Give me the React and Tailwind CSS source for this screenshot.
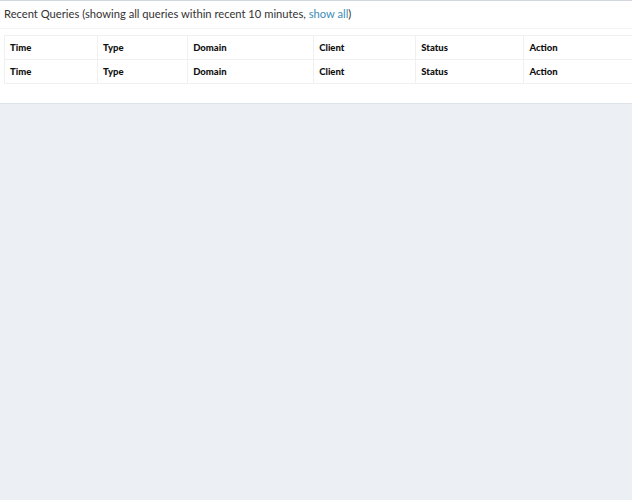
import React from 'react';

const columns = [
  { label: 'Time', width: 'w-[93px]' },
  { label: 'Type', width: 'w-[90px]' },
  { label: 'Domain', width: 'w-[126px]' },
  { label: 'Client', width: 'w-[102px]' },
  { label: 'Status', width: 'w-[108px]' },
  { label: 'Action', width: 'w-[120px]' },
];

const Row = () => (
  <tr className="border-t border-[#f0f0f0]">
    {columns.map((col, i) => (
      <th
        key={col.label}
        className={`${col.width} h-[24px] px-[5px] pt-[2px] text-left align-middle text-[9.5px] font-black text-[#111] ${i > 0 ? 'border-l border-[#f0f0f0]' : ''}`}
      >
        {col.label}
      </th>
    ))}
  </tr>
);

const App = () => {
  return (
    <div className="min-h-[500px] bg-[#ecf0f5] font-['Lato','Liberation_Sans',sans-serif]">
      <div className="bg-white border-t border-[#d2d6de] border-b border-b-[#dde2e8]">
        <div className="h-[28px] px-[4px] pb-[1px] flex items-center border-b border-[#f4f4f4]">
          <h3 className="text-[11.2px] text-[#333]">
            Recent Queries (showing all queries within recent 10 minutes,{' '}
            <a href="#" className="text-[#3c8dbc]">show all</a>)
          </h3>
        </div>
        <div className="pt-[6px] pl-[4px] pb-[19px] overflow-hidden">
          <table className="border-collapse border-l border-b border-[#f0f0f0] table-fixed w-[640px]">
            <thead>
              <Row />
            </thead>
            <tfoot>
              <Row />
            </tfoot>
          </table>
        </div>
      </div>
    </div>
  );
};

export default App;
